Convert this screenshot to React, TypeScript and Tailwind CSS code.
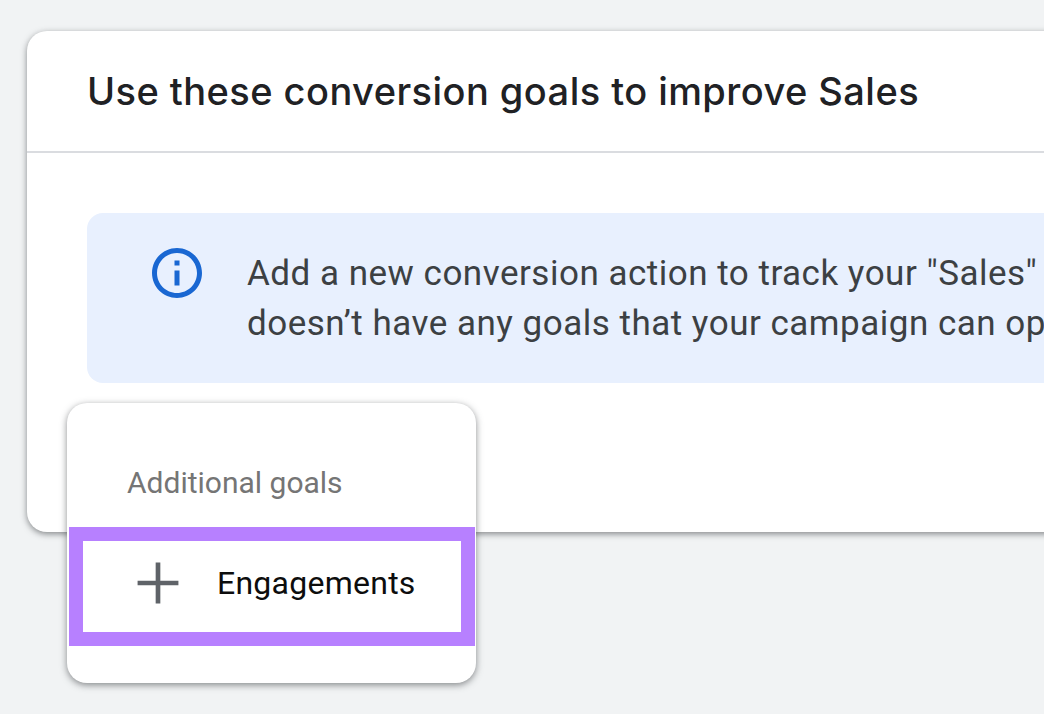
import React from "react";

export default function App() {
  return (
    <div className="relative w-[1044px] h-[714px] overflow-hidden bg-[#f1f3f4] pl-[27px] pt-[31px] font-['Roboto',sans-serif]">
      {/* Main card, runs off the right edge */}
      <div className="w-[1100px] h-[501px] bg-white rounded-[20px] shadow-[0_2px_6px_rgba(60,64,67,0.6)]">
        <div className="h-[122px] border-b-2 border-[#dadce0] pl-[60px] pt-[35px]">
          <h1 className="text-[38px] leading-[50px] font-[450] text-[#202124] tracking-[0.45px] whitespace-nowrap font-['Inter',sans-serif]">
            Use these conversion goals to improve Sales
          </h1>
        </div>
        <div className="ml-[60px] mt-[60px] w-[1040px] h-[170px] bg-[#e8f0fe] rounded-[16px] flex pl-[60px] pt-[30px]">
          <svg width="60" height="60" viewBox="0 0 24 24" fill="#1967d2" className="shrink-0 mr-[40px]">
            <path d="M11 7h2v2h-2zm0 4h2v6h-2zm1-9C6.48 2 2 6.48 2 12s4.48 10 10 10 10-4.48 10-10S17.520 2 12 2zm0 18c-4.41 0-8-3.59-8-8s3.590-8 8-8 8 3.590 8 8-3.590 8-8 8z" />
          </svg>
          <p className="mt-[6px] text-[35px] leading-[50px] text-[#3c4043] tracking-[0.5px] whitespace-nowrap">
            Add a new conversion action to track your "Sales" goal. Your account
            <br />
            doesn’t have any goals that your campaign can optimize toward.
          </p>
        </div>
      </div>

      {/* Popup menu over the card */}
      <div className="absolute left-[67px] top-[403px] w-[409px] h-[280px] bg-white rounded-[20px] shadow-[0_2px_7px_rgba(60,64,67,0.6)]">
        <div className="pl-[60px] pt-[61px] text-[30px] leading-[38px] text-[#757575] whitespace-nowrap">
          Additional goals
        </div>
        <div className="ml-[2px] mt-[25px] w-[406px] h-[119px] border-[14px] border-[#b780ff] flex items-center pl-[40px]">
          <svg width="70" height="70" viewBox="0 0 24 24" fill="#5f6368" className="shrink-0 mr-[24px] mt-[-7px]">
            <path d="M19 12.800h-6.200V19h-1.600v-6.200H5v-1.600h6.200V5h1.600v6.200H19v1.600z" />
          </svg>
          <span className="text-[32px] leading-[38px] tracking-[0.25px] text-[#0d0d0d] whitespace-nowrap mt-[-7px]">Engagements</span>
        </div>
      </div>
    </div>
  );
}
